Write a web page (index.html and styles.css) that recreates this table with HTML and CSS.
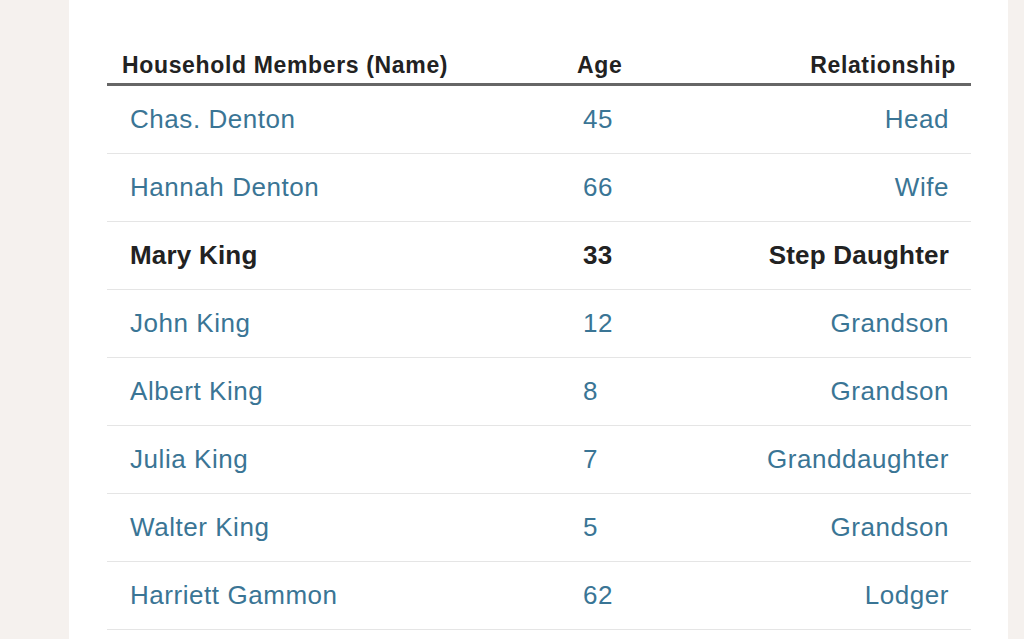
FILE: index.html
```html
<!DOCTYPE html>
<html lang="en">
<head>
<meta charset="utf-8">
<title>Household Members</title>
<link rel="stylesheet" href="styles.css">
</head>
<body>
<main class="panel">
  <div class="table">
    <div class="row head">
      <div class="cell name">Household Members (Name)</div>
      <div class="cell age">Age</div>
      <div class="cell rel">Relationship</div>
    </div>
    <div class="row"><div class="cell name">Chas. Denton</div><div class="cell age">45</div><div class="cell rel">Head</div></div>
    <div class="row"><div class="cell name">Hannah Denton</div><div class="cell age">66</div><div class="cell rel">Wife</div></div>
    <div class="row current"><div class="cell name">Mary King</div><div class="cell age">33</div><div class="cell rel">Step Daughter</div></div>
    <div class="row"><div class="cell name">John King</div><div class="cell age">12</div><div class="cell rel">Grandson</div></div>
    <div class="row"><div class="cell name">Albert King</div><div class="cell age">8</div><div class="cell rel">Grandson</div></div>
    <div class="row"><div class="cell name">Julia King</div><div class="cell age">7</div><div class="cell rel">Granddaughter</div></div>
    <div class="row"><div class="cell name">Walter King</div><div class="cell age">5</div><div class="cell rel">Grandson</div></div>
    <div class="row"><div class="cell name">Harriett Gammon</div><div class="cell age">62</div><div class="cell rel">Lodger</div></div>
  </div>
</main>
</body>
</html>
```
FILE: styles.css
```css
html, body {
  margin: 0;
  padding: 0;
  background: #f5f1ee;
  height: 100%;
  overflow: hidden;
}
body {
  font-family: "Liberation Sans", Arial, sans-serif;
}
.panel {
  margin-left: 69px;
  width: 939px;
  height: 639px;
  background: #ffffff;
  box-sizing: border-box;
  padding: 48px 37px 0 38px;
}
.table {
  display: flex;
  flex-direction: column;
}
.row {
  display: grid;
  grid-template-columns: 455px 200px 1fr;
  height: 68px;
  border-bottom: 1px solid #e5e5e5;
  box-sizing: border-box;
  align-items: center;
  color: #3a7595;
  font-size: 26px;
  letter-spacing: 0.55px;
}
.row .name { padding-left: 23px; }
.row .age { padding-left: 21px; }
.row .rel { text-align: right; padding-right: 22px; }
.row.head {
  height: 38px;
  padding-top: 4px;
  align-items: start;
  border-bottom: 3px solid #666666;
  color: #222222;
  font-size: 23px;
  font-weight: bold;
  letter-spacing: 0.65px;
}
.row.head .name { padding-left: 15px; }
.row.head .age { padding-left: 15px; }
.row.head .rel { padding-right: 15px; }
.row.current {
  color: #222222;
  font-weight: bold;
  letter-spacing: 0.2px;
}
```
